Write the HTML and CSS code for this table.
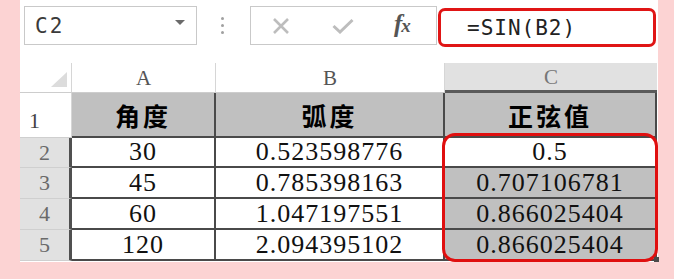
FILE: index.html
```html
<!DOCTYPE html>
<html>
<head>
<meta charset="utf-8">
<link rel="stylesheet" href="styles.css">
</head>
<body>
<div class="panel">
  <div class="fbar">
    <div class="namebox"><span class="nb-text">C2</span><span class="dd"></span></div>
    <div class="dots"><i></i><i></i><i></i></div>
    <div class="fxbox">
      <svg class="ico-x" width="18" height="16" viewBox="0 0 18 16"><path d="M2 1 L16 15 M16 1 L2 15" stroke="#bdbdbd" stroke-width="2.6" fill="none"/></svg>
      <svg class="ico-ok" width="22" height="16" viewBox="0 0 22 16"><path d="M1.5 8 L8 14 L20.5 2" stroke="#bdbdbd" stroke-width="3" fill="none"/></svg>
      <span class="fx">f<span class="fx-x">x</span></span>
    </div>
    <div class="formula">=SIN(B2)</div>
  </div>
  <div class="sheet">
    <div class="corner"><span class="tri"></span></div>
    <div class="colh">A</div>
    <div class="colh">B</div>
    <div class="colh sel">C</div>

    <div class="rowh r1">1</div>
    <div class="cell hd">角度</div>
    <div class="cell hd">弧度</div>
    <div class="cell hd">正弦值</div>

    <div class="rowh">2</div>
    <div class="cell">30</div>
    <div class="cell">0.523598776</div>
    <div class="cell">0.5</div>

    <div class="rowh">3</div>
    <div class="cell">45</div>
    <div class="cell">0.785398163</div>
    <div class="cell gray">0.707106781</div>

    <div class="rowh">4</div>
    <div class="cell">60</div>
    <div class="cell">1.047197551</div>
    <div class="cell gray">0.866025404</div>

    <div class="rowh">5</div>
    <div class="cell">120</div>
    <div class="cell">2.094395102</div>
    <div class="cell gray">0.866025404</div>

    <div class="sel-ring"></div>
    <div class="handle"></div>
  </div>
</div>
</body>
</html>
```

FILE: styles.css
```css
html, body {
  margin: 0;
  padding: 0;
}
body {
  background: #fcd3d3;
  width: 674px;
  height: 279px;
  overflow: hidden;
}
.panel {
  margin-left: 20px;
  width: 638px;
  height: 262px;
  background: #ffffff;
  display: flex;
  flex-direction: column;
}
.fbar {
  height: 63px;
  display: flex;
  align-items: flex-start;
}
.namebox {
  margin-left: 4px;
  margin-top: 6px;
  width: 173px;
  height: 39px;
  box-sizing: border-box;
  border: 1px solid #c9c9c9;
  display: flex;
  align-items: center;
  justify-content: space-between;
  padding-left: 10px;
  padding-right: 11px;
}
.nb-text {
  font-family: "DejaVu Sans Mono", monospace;
  font-size: 21px;
  color: #3a3a3a;
  letter-spacing: 2px;
}
.dd {
  width: 0;
  height: 0;
  border-left: 5px solid transparent;
  border-right: 5px solid transparent;
  border-top: 5px solid #6a6a6a;
  margin-top: -6px;
}
.dots {
  margin-left: 24px;
  margin-top: 17px;
  width: 4px;
  display: flex;
  flex-direction: column;
  gap: 4px;
}
.dots i {
  display: block;
  width: 3px;
  height: 3px;
  border-radius: 50%;
  background: #a0a0a0;
}
.fxbox {
  margin-left: 25px;
  margin-top: 6px;
  width: 187px;
  height: 39px;
  box-sizing: border-box;
  border: 1px solid #c9c9c9;
  display: flex;
  align-items: center;
  padding-left: 21px;
}
.ico-x {
  display: block;
}
.ico-ok {
  display: block;
  margin-left: 42px;
  margin-top: 1px;
}
.fx {
  margin-left: 40px;
  font-family: "Liberation Serif", serif;
  font-style: italic;
  font-weight: bold;
  font-size: 25px;
  color: #555;
  margin-top: -3px;
  letter-spacing: -1px;
}
.fx-x {
  font-size: 19px;
}
.formula {
  margin-left: 1px;
  margin-top: 8px;
  width: 218px;
  height: 39px;
  box-sizing: border-box;
  border: 3px solid #e01515;
  border-radius: 7px;
  padding-left: 26px;
  display: flex;
  align-items: center;
  font-family: "DejaVu Sans Mono", monospace;
  font-size: 21px;
  color: #222;
  letter-spacing: 1px;
}
.sheet {
  position: relative;
  display: grid;
  grid-template-columns: 52px 144px 229px 212px;
  grid-template-rows: 30px 45px 30px 31px 31px 31px;
}
.corner {
  position: relative;
  border-right: 1px solid #d6d6d6;
  border-bottom: 1px solid #cdcdcd;
}
.tri {
  position: absolute;
  right: 4px;
  bottom: 5px;
  width: 0;
  height: 0;
  border-left: 16px solid transparent;
  border-bottom: 15px solid #dcdcdc;
}
.colh {
  display: flex;
  align-items: flex-end;
  justify-content: center;
  padding-bottom: 1px;
  border-right: 1px solid #d6d6d6;
  border-bottom: 1px solid #cdcdcd;
  font-family: "Liberation Serif", serif;
  font-size: 21px;
  color: #555;
}
.colh.sel {
  background: #e1e1e1;
  border-bottom: 3px solid #5a5a5a;
  border-right: none;
  padding-bottom: 0;
  color: #777;
}
.rowh {
  display: flex;
  align-items: center;
  justify-content: center;
  background: #e1e1e1;
  border-right: 3px solid #505050;
  border-bottom: 1px solid #cfcfcf;
  font-family: "Liberation Serif", serif;
  font-size: 22px;
  color: #6a6a6a;
}
.rowh.r1 {
  background: #ffffff;
  border-right: 1px solid #d6d6d6;
  align-items: flex-end;
  justify-content: flex-start;
  padding-left: 9px;
  padding-bottom: 3px;
  color: #444;
}
.cell {
  display: flex;
  align-items: center;
  justify-content: center;
  border-right: 2px solid #4a4a4a;
  border-bottom: 2px solid #4a4a4a;
  font-family: "Liberation Serif", serif;
  font-size: 26px;
  letter-spacing: 1px;
  color: #111;
  background: #ffffff;
}
.cell.hd {
  background: #c0c0c0;
  font-family: "Noto Sans CJK SC", sans-serif;
  font-weight: 700;
  font-size: 25px;
  letter-spacing: 3px;
  color: #000;
}
.cell.gray {
  background: #c0c0c0;
}
.sel-ring {
  position: absolute;
  left: 422px;
  top: 70px;
  width: 216px;
  height: 129px;
  box-sizing: border-box;
  border: 3px solid #e00f0f;
  border-radius: 13px;
}
.handle {
  position: absolute;
  left: 634px;
  top: 194px;
  width: 5px;
  height: 5px;
  background: #4a4a4a;
}
```
